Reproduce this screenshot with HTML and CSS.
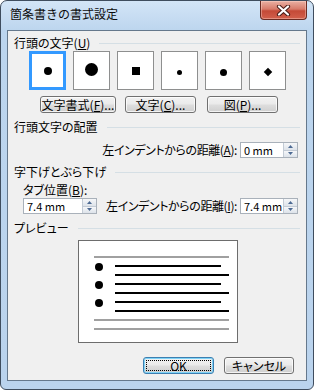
FILE: index.html
```html
<!DOCTYPE html>
<html lang="ja">
<head>
  <meta charset="UTF-8">
  <title>箇条書きの書式設定</title>
  <link rel="stylesheet" href="styles.css">
</head>
<body>

  <div class="window">
    <!-- Title bar -->
    <div class="titlebar">
      <span class="title">箇条書きの書式設定</span>
      <div class="close">
        <svg width="15" height="11" viewBox="0 0 15 11">
          <path d="M3 1.5 L12 9.5 M12 1.5 L3 9.5" stroke="#4a1e18" stroke-width="4.2" stroke-linecap="round"/>
          <path d="M3 1.5 L12 9.5 M12 1.5 L3 9.5" stroke="#ffffff" stroke-width="2.2" stroke-linecap="round"/>
        </svg>
      </div>
    </div>

    <div class="client">
      <!-- Bullet characters -->
      <div class="group-head first"><span>行頭の文字(<u>U</u>)</span><i class="rule"></i></div>
      <div class="bullets">
        <div class="bullet-box selected"><span class="dot d8"></span></div>
        <div class="bullet-box"><span class="dot d13"></span></div>
        <div class="bullet-box"><span class="square"></span></div>
        <div class="bullet-box"><span class="dot d5 low"></span></div>
        <div class="bullet-box"><span class="dot d7 low"></span></div>
        <div class="bullet-box"><span class="diamond low"></span></div>
      </div>
      <div class="btn-row">
        <div class="btn w76">文字書式(<u>F</u>)...</div>
        <div class="btn w71 gap9">文字(<u>C</u>)...</div>
        <div class="btn w71 gap11">図(<u>P</u>)...</div>
      </div>

      <!-- Bullet position -->
      <div class="group-head"><span>行頭文字の配置</span><i class="rule"></i></div>
      <div class="field-row top">
        <span class="label">左インデントからの距離(<u>A</u>):</span>
        <div class="spin w58">
          <span class="val">0 mm</span>
          <div class="arrows">
            <div class="up"><svg width="5" height="3" viewBox="0 0 5 3"><path d="M0 3 L2.5 0 L5 3 Z" fill="#4d6a93"/></svg></div>
            <div class="down"><svg width="5" height="3" viewBox="0 0 5 3"><path d="M0 0 L2.5 3 L5 0 Z" fill="#4d6a93"/></svg></div>
          </div>
        </div>
      </div>

      <!-- Text position -->
      <div class="group-head"><span>字下げとぶら下げ</span><i class="rule"></i></div>
      <div class="sub-label">タブ位置(<u>B</u>):</div>
      <div class="field-row">
        <div class="spin w74">
          <span class="val">7.4 mm</span>
          <div class="arrows">
            <div class="up"><svg width="5" height="3" viewBox="0 0 5 3"><path d="M0 3 L2.5 0 L5 3 Z" fill="#4d6a93"/></svg></div>
            <div class="down"><svg width="5" height="3" viewBox="0 0 5 3"><path d="M0 0 L2.5 3 L5 0 Z" fill="#4d6a93"/></svg></div>
          </div>
        </div>
        <span class="label push">左インデントからの距離(<u>I</u>):</span>
        <div class="spin w58">
          <span class="val">7.4 mm</span>
          <div class="arrows">
            <div class="up"><svg width="5" height="3" viewBox="0 0 5 3"><path d="M0 3 L2.5 0 L5 3 Z" fill="#4d6a93"/></svg></div>
            <div class="down"><svg width="5" height="3" viewBox="0 0 5 3"><path d="M0 0 L2.5 3 L5 0 Z" fill="#4d6a93"/></svg></div>
          </div>
        </div>
      </div>

      <!-- Preview -->
      <div class="group-head"><span>プレビュー</span><i class="rule"></i></div>
      <div class="preview">
        <div class="gray-line"></div>
        <div class="items">
          <div class="item"><span class="pdot"></span><div class="plines"><div class="pline short"></div><div class="pline"></div></div></div>
          <div class="item"><span class="pdot"></span><div class="plines"><div class="pline short"></div><div class="pline"></div></div></div>
          <div class="item"><span class="pdot"></span><div class="plines"><div class="pline short"></div><div class="pline"></div></div></div>
        </div>
        <div class="gray-line after"></div>
        <div class="gray-line last"></div>
      </div>

      <div class="actions">
        <div class="btn default w71"><span class="focus">OK</span></div>
        <div class="btn w70">キャンセル</div>
      </div>
    </div>
  </div>

</body>
</html>
```

FILE: styles.css
```css
* {
  box-sizing: border-box;
}

body {
  margin: 0;
  background: #ffffff;
  font-family: "Noto Sans CJK JP", "Noto Sans", sans-serif;
  font-size: 12px;
  color: #000;
}

u {
  text-decoration: underline;
  text-underline-offset: 1px;
}

/* Window frame */
.window {
  width: 314px;
  height: 390px;
  border: 1px solid #3f4d5e;
  border-radius: 7px 7px 6px 6px;
  background: linear-gradient(#d3e5f7, #bcd5ee 30px, #bad3ed);
  padding: 0 6px 8px;
  display: flex;
  flex-direction: column;
}

.titlebar {
  height: 29px;
  display: flex;
  align-items: flex-start;
}

.title {
  padding: 5px 0 0 3px;
  line-height: 16px;
  color: #0b0b0b;
}

.close {
  margin-left: auto;
  width: 47px;
  height: 19px;
  border: 1px solid #6a2b22;
  border-top: none;
  border-radius: 0 0 4px 4px;
  background: linear-gradient(#eab0a3, #d77b6a 45%, #c44a37 55%, #d2604c);
  box-shadow: inset 0 0 0 1px rgba(255, 220, 210, 0.4);
  display: flex;
  align-items: center;
  justify-content: center;
}

.client {
  flex: 1;
  background: #f0f0f0;
  border: 1px solid #65788c;
  font-feature-settings: "palt";
}

/* Section headers */
.group-head {
  display: flex;
  align-items: center;
  height: 16px;
  line-height: 16px;
  padding: 0 6px;
  margin-top: 6px;
}

.group-head.first {
  margin-top: 4px;
}

.group-head .rule {
  flex: 1;
  height: 1px;
  margin-left: 9px;
  background: #d5dfe5;
}

/* Bullet picker */
.bullets {
  display: flex;
  gap: 7px;
  padding-left: 21px;
}

.bullet-box {
  width: 37px;
  height: 39px;
  background: #fff;
  border: 1px solid #8e8f8f;
  display: flex;
  align-items: center;
  justify-content: center;
}

.bullet-box.selected {
  border: 3px solid #3399ff;
}

.dot {
  display: block;
  border-radius: 50%;
  background: #000;
}

.d5 { width: 5px; height: 5px; }
.d7 { width: 7px; height: 7px; }
.d8 { width: 8px; height: 8px; }
.d13 { width: 13px; height: 13px; margin-top: -3px; }

.low {
  margin-top: 3px;
}

.square {
  display: block;
  width: 8px;
  height: 8px;
  background: #000;
}

.diamond {
  display: block;
  width: 6px;
  height: 6px;
  background: #000;
  transform: rotate(45deg);
}

/* Buttons */
.btn-row {
  display: flex;
  margin-top: 6px;
  padding-left: 32px;
}

.btn {
  height: 17px;
  border: 1px solid #707070;
  border-radius: 3px;
  background: linear-gradient(#f2f2f2, #ebebeb 45%, #dddddd 55%, #cfcfcf);
  box-shadow: inset 0 0 0 1px rgba(255, 255, 255, 0.75);
  display: flex;
  align-items: center;
  justify-content: center;
  line-height: 14px;
  white-space: nowrap;
}

.btn.default {
  border-color: #3c7fb1;
  box-shadow: inset 0 0 0 1px #7fd3f7;
  padding: 2px;
}

.btn .focus {
  display: flex;
  align-items: center;
  justify-content: center;
  width: 100%;
  height: 100%;
  border: 1px dotted #000;
}

.w70 { width: 70px; }
.w71 { width: 71px; }
.w76 { width: 76px; }
.gap9 { margin-left: 9px; }
.gap11 { margin-left: 11px; }

/* Spin fields */
.field-row {
  display: flex;
  align-items: center;
  gap: 3px;
  height: 16px;
  padding: 0 8px 0 15px;
}

.field-row.top {
  justify-content: flex-end;
  margin-top: 7px;
}

.label {
  line-height: 16px;
  white-space: nowrap;
  letter-spacing: -0.4px;
}

.label.push {
  margin-left: auto;
}

.sub-label {
  padding-left: 15px;
  margin-top: 2px;
  line-height: 16px;
}

.spin {
  display: flex;
  flex-shrink: 0;
  height: 16px;
  background: #fff;
  border: 1px solid #a9b1ba;
}

.w58 { width: 58px; }
.w74 { width: 74px; }

.spin .val {
  flex: 1;
  padding-left: 3px;
  font-size: 11px;
  line-height: 14px;
  white-space: nowrap;
}

.spin .arrows {
  width: 14px;
  display: flex;
  flex-direction: column;
  border-left: 1px solid #c3cbd5;
}

.arrows .up,
.arrows .down {
  flex: 1;
  display: flex;
  align-items: center;
  justify-content: center;
  background: linear-gradient(#f6f7f9, #dde3ea);
}

.arrows .up {
  border-bottom: 1px solid #c3cbd5;
}

.arrows svg {
  display: block;
}

/* Preview */
.preview {
  width: 160px;
  margin: 4px 0 0 70px;
  background: #fff;
  border: 1px solid #6d6d6d;
  padding: 15px 8px 12px 15px;
}

.gray-line {
  height: 2px;
  background: #a0a0a0;
}

.gray-line.after {
  margin-top: 2px;
}

.gray-line.last {
  margin-top: 7px;
}

.items {
  margin-top: 5px;
}

.item {
  display: flex;
  height: 18px;
  padding-left: 1px;
}

.pdot {
  width: 8px;
  height: 8px;
  border-radius: 50%;
  background: #000;
}

.plines {
  flex: 1;
  margin-left: 12px;
  padding-top: 2px;
}

.pline {
  height: 2px;
  background: #000;
}

.pline.short {
  width: 106px;
}

.pline + .pline {
  margin-top: 7px;
}

/* Dialog buttons */
.actions {
  display: flex;
  justify-content: flex-end;
  gap: 10px;
  padding-right: 12px;
  margin-top: 14px;
}
```
